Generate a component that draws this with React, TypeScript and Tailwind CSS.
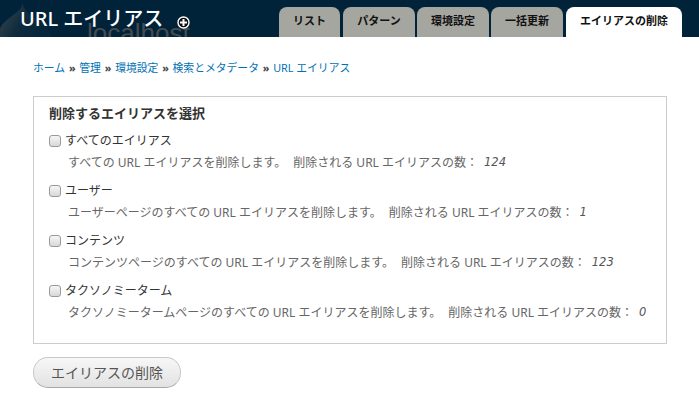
import React from "react";

const FONT = "font-['Noto_Sans','Noto_Sans_CJK_JP',sans-serif]";

const tabs = ["リスト", "パターン", "環境設定", "一括更新"];
const tabWidths = ["w-[61px] mr-[3px]", "w-[72px] mr-[2px]", "w-[72px] mr-[2px]", "w-[72px] mr-[3px]"];

const rows = [
  { label: "すべてのエイリアス", desc: "すべての URL エイリアスを削除します。", count: "124" },
  { label: "ユーザー", desc: "ユーザーページのすべての URL エイリアスを削除します。", count: "1" },
  { label: "コンテンツ", desc: "コンテンツページのすべての URL エイリアスを削除します。", count: "123" },
  { label: "タクソノミーターム", desc: "タクソノミータームページのすべての URL エイリアスを削除します。", count: "0" },
];

const crumbs = ["ホーム", "管理", "環境設定", "検索とメタデータ", "URL エイリアス"];

const App: React.FC = () => {
  return (
    <div className={`${FONT} w-[699px] h-[408px] bg-white overflow-hidden`}>
      {/* ヘッダー */}
      <div className="relative h-[37px] bg-[#00233a] flex justify-between overflow-hidden">
        <div className="absolute left-[87px] top-[16px] text-[26px] leading-[34px] text-[#454b4e] font-['Liberation_Sans',sans-serif]">
          localhost
        </div>
        <svg className="absolute left-0 top-0" width="60" height="37" viewBox="0 0 60 37">
          <defs>
            <linearGradient id="drop" x1="0" y1="0" x2="1" y2="0.4">
              <stop offset="0" stopColor="#3d484d" />
              <stop offset="0.55" stopColor="#0f2b3e" />
              <stop offset="1" stopColor="#05263b" />
            </linearGradient>
          </defs>
          <path d="M22 3c1 5-4 8-10 13C6 21 0 25 0 30v7h52c-2-7-7-12-13-16-7-5-15-10-17-18z" fill="url(#drop)" />
        </svg>
        <div className="relative flex items-center pl-[20px]">
          <h1 className="text-[20px] leading-[28px] font-medium text-white whitespace-nowrap">URL エイリアス</h1>
          <svg className="ml-[14px] mt-[8px]" width="13" height="13" viewBox="0 0 13 13">
            <circle cx="6.500" cy="6.500" r="5.500" fill="#111" stroke="#fff" strokeWidth="1.400" />
            <path d="M5.500 3h2v2.500H10v2H7.500V10h-2V7.500H3v-2h2.500z" fill="#fff" />
          </svg>
        </div>
        <div className="relative flex items-end pr-[17px]">
          {tabs.map((t, i) => (
            <div
              key={t}
              className={`${tabWidths[i]} h-[30px] rounded-t-[8px] bg-[#a6a6a0] text-[11px] font-bold text-[#111] flex items-center justify-center pb-[1px]`}
            >
              {t}
            </div>
          ))}
          <div className="w-[116px] h-[30px] rounded-t-[8px] bg-white text-[11px] font-bold text-[#111] flex items-center justify-center pb-[1px]">
            エイリアスの削除
          </div>
        </div>
      </div>

      <div className="px-[33px]">
        {/* パンくず */}
        <div className="mt-[22px] h-[18px] flex items-center text-[10.8px] text-[#0071b3] whitespace-nowrap">
          {crumbs.map((c, i) => (
            <React.Fragment key={c}>
              {i > 0 && <span className="mx-[3.800px] font-bold text-[#444]">»</span>}
              <span>{c}</span>
            </React.Fragment>
          ))}
        </div>

        {/* フィールドセット */}
        <div className="mt-[19px] w-[634px] h-[248px] border border-[#ccc] pl-[15px] pt-[7px]">
          <div className="text-[13px] leading-[18px] font-bold text-[#333]">削除するエイリアスを選択</div>
          <div className="mt-[10px] flex flex-col gap-[14px]">
            {rows.map((r) => (
              <div key={r.label} className="h-[36px]">
                <div className="flex items-center h-[18px]">
                  <span className="w-[12px] h-[12px] rounded-[3px] border border-[#9a9a9a] bg-gradient-to-b from-[#f6f6f6] to-[#d8d8d8]" />
                  <span className="ml-[4px] text-[12px] text-[#333] whitespace-nowrap">{r.label}</span>
                </div>
                <div className="mt-[4px] ml-[19px] h-[18px] flex items-center text-[12px] text-[#666] whitespace-nowrap">
                  <span>{r.desc}</span>
                  <span className="ml-[7px]">削除される URL エイリアスの数：</span>
                  <em className="ml-[6px] text-[11.500px] text-[#555] font-['DejaVu_Sans',sans-serif]">{r.count}</em>
                </div>
              </div>
            ))}
          </div>
        </div>

        {/* ボタン */}
        <button className="mt-[13px] w-[148px] h-[31px] rounded-[15px] border border-[#c8c8c8] border-b-[#a8a8a8] bg-gradient-to-b from-[#f7f7f7] to-[#e2e2e2] text-[14px] text-[#555] flex items-center justify-center">
          エイリアスの削除
        </button>
      </div>
    </div>
  );
};

export default App;
